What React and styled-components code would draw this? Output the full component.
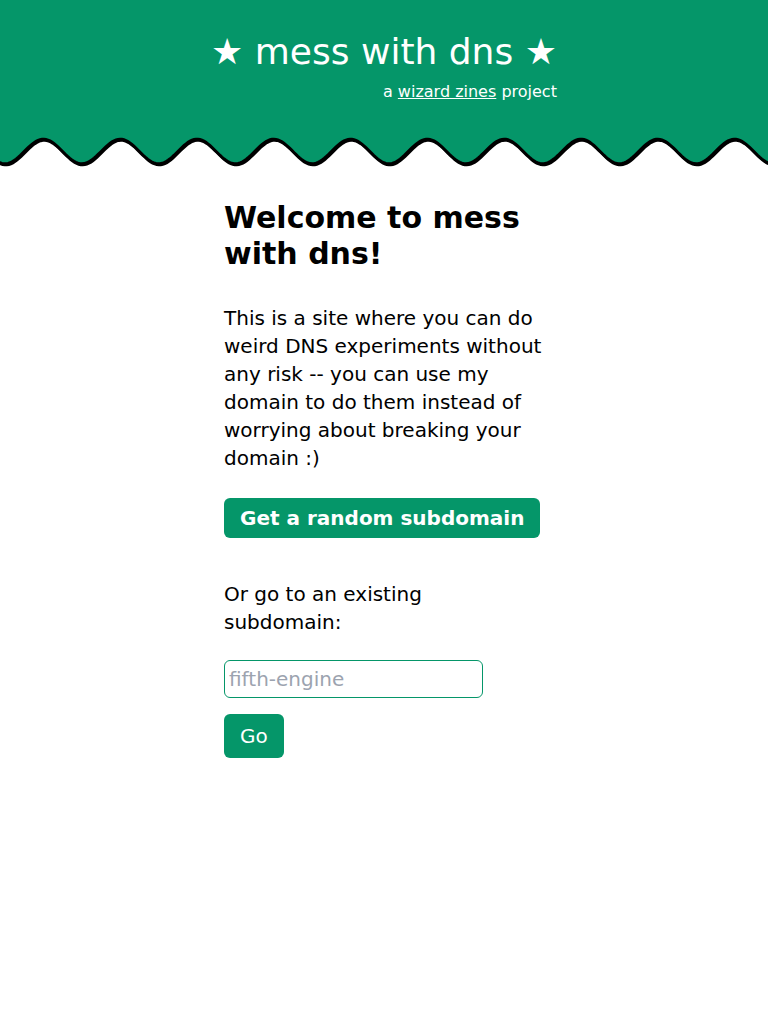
import React from "react";
import styled, { createGlobalStyle } from "styled-components";

const GREEN = "#059669";

const Global = createGlobalStyle`
  html, body { margin: 0; padding: 0; background: #fff; }
  body { font-family: "DejaVu Sans", Verdana, sans-serif; color: #000; }
  * { box-sizing: border-box; }
`;

const Header = styled.header`
  background: ${GREEN};
  color: #fff;
  display: flex;
  justify-content: center;
  padding: 32px 0 0;
  height: 128px;
`;

const TitleBlock = styled.div`
  display: inline-flex;
  flex-direction: column;
  align-items: flex-end;
`;

const Title = styled.h1`
  margin: 0;
  font-size: 36px;
  line-height: 40px;
  font-weight: 400;
`;

const Sub = styled.div`
  margin-top: 8px;
  font-size: 16px;
  line-height: 24px;
  a { color: #fff; text-decoration: underline; }
`;

const WaveSvg = styled.svg`
  display: block;
  width: 100%;
  height: 42px;
`;

const Main = styled.main`
  width: 320px;
  margin: 0 auto;
  padding-top: 30px;
  display: flex;
  flex-direction: column;
  align-items: flex-start;
`;

const Heading = styled.h2`
  margin: 0;
  font-size: 30px;
  line-height: 36px;
  font-weight: 700;
`;

const Text = styled.p`
  margin: ${(p) => p.$mt || 0}px 0 0;
  font-size: 20px;
  line-height: 28px;
`;

const Button = styled.button`
  margin-top: ${(p) => p.$mt || 0}px;
  background: ${GREEN};
  color: #fff;
  border: none;
  border-radius: 6px;
  font-family: inherit;
  font-size: 20px;
  line-height: 28px;
  font-weight: ${(p) => (p.$bold ? 700 : 400)};
  padding: ${(p) => (p.$bold ? "6px 16px" : "8px 16px")};
  cursor: pointer;
`;

const Input = styled.input`
  margin-top: 24px;
  width: 259px;
  height: 38px;
  border: 1px solid ${GREEN};
  border-radius: 6px;
  padding: 4px;
  font-family: inherit;
  font-size: 20px;
  line-height: 28px;
  outline: none;
  &::placeholder { color: #9ca3af; }
`;

function Wave() {
  const W = 768;
  const period = 76.8;
  const phase = 5; // trough x
  const mid = 23.3;
  const amp = 12.3;
  const pts = [];
  for (let x = -2; x <= W + 2; x += 2) {
    const y = mid + amp * Math.cos(((x - phase) / period) * 2 * Math.PI);
    pts.push(`${x},${y.toFixed(2)}`);
  }
  const line = "M" + pts.join(" L");
  const fill = `M-2,0 L${pts.join(" L")} L${W + 2},0 Z`;
  return (
    <WaveSvg viewBox="0 0 768 42" preserveAspectRatio="none">
      <path d={line} fill="none" stroke="#000" strokeWidth="3" transform="translate(0.8,1.2)" />
      <path d={fill} fill={GREEN} />
      <path d={line} fill="none" stroke="#000" strokeWidth="2.6" />
    </WaveSvg>
  );
}

export default function App() {
  return (
    <>
      <Global />
      <Header>
        <TitleBlock>
          <Title>★ mess with dns ★</Title>
          <Sub>
            a <a href="#">wizard zines</a> project
          </Sub>
        </TitleBlock>
      </Header>
      <Wave />
      <Main>
        <Heading>Welcome to mess with dns!</Heading>
        <Text $mt={32}>
          This is a site where you can do weird DNS experiments without any
          risk -- you can use my domain to do them instead of worrying about
          breaking your domain :)
        </Text>
        <Button $bold $mt={26}>Get a random subdomain</Button>
        <Text $mt={42}>Or go to an existing subdomain:</Text>
        <Input placeholder="fifth-engine" />
        <Button $mt={16}>Go</Button>
      </Main>
    </>
  );
}
